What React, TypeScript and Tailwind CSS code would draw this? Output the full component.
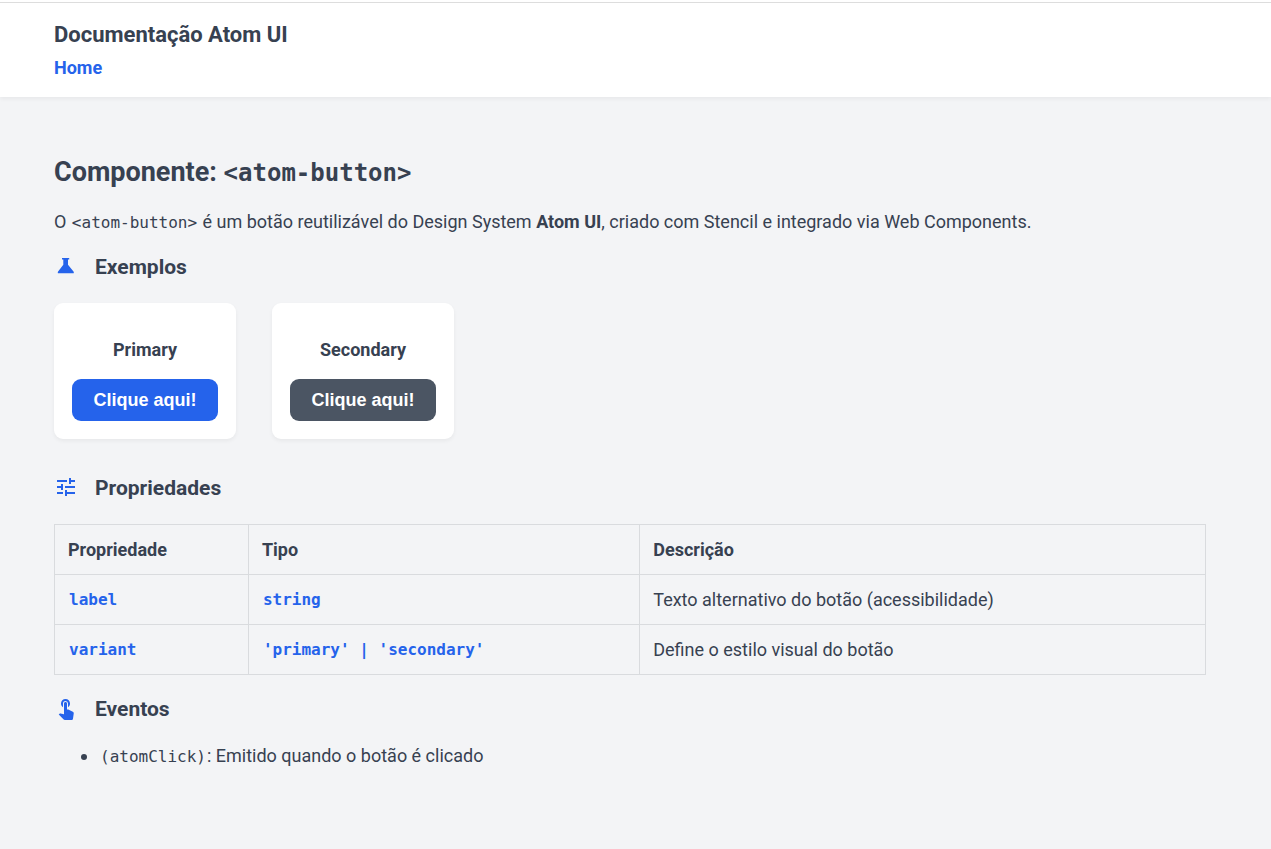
import type { ReactNode } from "react";
import { MdTouchApp, MdTune } from "react-icons/md";

const examples = [
  { title: "Primary", color: "bg-[#2563eb]" },
  { title: "Secondary", color: "bg-[#4b5563]" },
];

const properties = [
  { name: "label", type: "string", description: "Texto alternativo do botão (acessibilidade)" },
  { name: "variant", type: "'primary' | 'secondary'", description: "Define o estilo visual do botão" },
];

function FlaskIcon() {
  return (
    <svg viewBox="0 0 24 24" className="size-6" fill="currentColor" aria-hidden="true">
      <path d="M8 4h7.2v1.5h-1.2v5.2l5.5 6.8q.6.9.2 1.7H3.9q-.4-.8.2-1.7L9.3 10.7V5.5H8z" />
    </svg>
  );
}

function SectionTitle({ icon, children }: { icon: ReactNode; children: ReactNode }) {
  return (
    <h2 className="flex h-6 items-center text-[21px] leading-6 font-bold">
      <span className="mr-[17px] pb-[3px] text-[#2563eb]">{icon}</span>
      {children}
    </h2>
  );
}

function Code({ children }: { children: ReactNode }) {
  return <code className="px-px font-['DejaVu_Sans_Mono',monospace] text-[16px]">{children}</code>;
}

export default function App() {
  return (
    <div className="min-h-screen bg-[#f3f4f6] font-['Roboto',sans-serif] text-[18px] leading-7 text-[#374151]">
      <header className="bg-white pt-[2px] shadow-[0_2px_4px_rgba(0,0,0,0.05)]">
        <div className="border-t border-[#dddddd] pt-4 pr-[65px] pb-[15px] pl-[54px]">
          <p className="text-[22px] leading-8 font-bold">Documentação Atom UI</p>
          <nav className="mt-[3px]">
            <a href="#" className="font-bold text-[#2563eb]">Home</a>
          </nav>
        </div>
      </header>

      <main className="pt-[57px] pr-[65px] pb-10 pl-[54px]">
        <h1 className="text-[27px] leading-9 font-bold">
          Componente: <code className="font-['DejaVu_Sans_Mono',monospace] text-[24px]">&lt;atom-button&gt;</code>
        </h1>
        <p className="mt-[17px]">
          O <Code>&lt;atom-button&gt;</Code> é um botão reutilizável do Design System <strong>Atom UI</strong>, criado com
          Stencil e integrado via Web Components.
        </p>

        <section className="mt-[18px]">
          <SectionTitle icon={<FlaskIcon />}>Exemplos</SectionTitle>
          <div className="mt-6 flex flex-wrap gap-9">
            {examples.map((example) => (
              <article
                key={example.title}
                className="rounded-[9px] bg-white px-[18px] pt-[33px] pb-[18px] text-center shadow-[0_2px_4px_rgba(0,0,0,0.05)]"
              >
                <h3 className="font-bold">{example.title}</h3>
                <button
                  type="button"
                  className={`mt-[15px] block h-[42px] w-[146px] cursor-pointer rounded-[9px] font-['Liberation_Sans',sans-serif] font-bold text-white ${example.color}`}
                >
                  Clique aqui!
                </button>
              </article>
            ))}
          </div>
        </section>

        <section className="mt-[37px]">
          <SectionTitle icon={<MdTune className="size-6" aria-hidden="true" />}>Propriedades</SectionTitle>
          <table className="mt-6 w-full table-fixed border-collapse text-left">
            <colgroup>
              <col className="w-[16.85%]" />
              <col className="w-[34%]" />
              <col />
            </colgroup>
            <thead>
              <tr className="h-[50px]">
                {["Propriedade", "Tipo", "Descrição"].map((heading) => (
                  <th key={heading} className="border border-[#d9dbde] px-[13px] font-bold">
                    {heading}
                  </th>
                ))}
              </tr>
            </thead>
            <tbody>
              {properties.map((property) => (
                <tr key={property.name} className="h-[50px]">
                  <td className="border border-[#d9dbde] px-[13px] font-bold text-[#2563eb]">
                    <Code>{property.name}</Code>
                  </td>
                  <td className="border border-[#d9dbde] px-[13px] font-bold text-[#2563eb]">
                    <Code>{property.type}</Code>
                  </td>
                  <td className="border border-[#d9dbde] px-[13px]">{property.description}</td>
                </tr>
              ))}
            </tbody>
          </table>
        </section>

        <section className="mt-[22px]">
          <SectionTitle icon={<MdTouchApp className="size-6" aria-hidden="true" />}>Eventos</SectionTitle>
          <ul className="mt-[21px] list-disc pl-[45px]">
            <li>
              <Code>(atomClick)</Code>: Emitido quando o botão é clicado
            </li>
          </ul>
        </section>
      </main>
    </div>
  );
}
